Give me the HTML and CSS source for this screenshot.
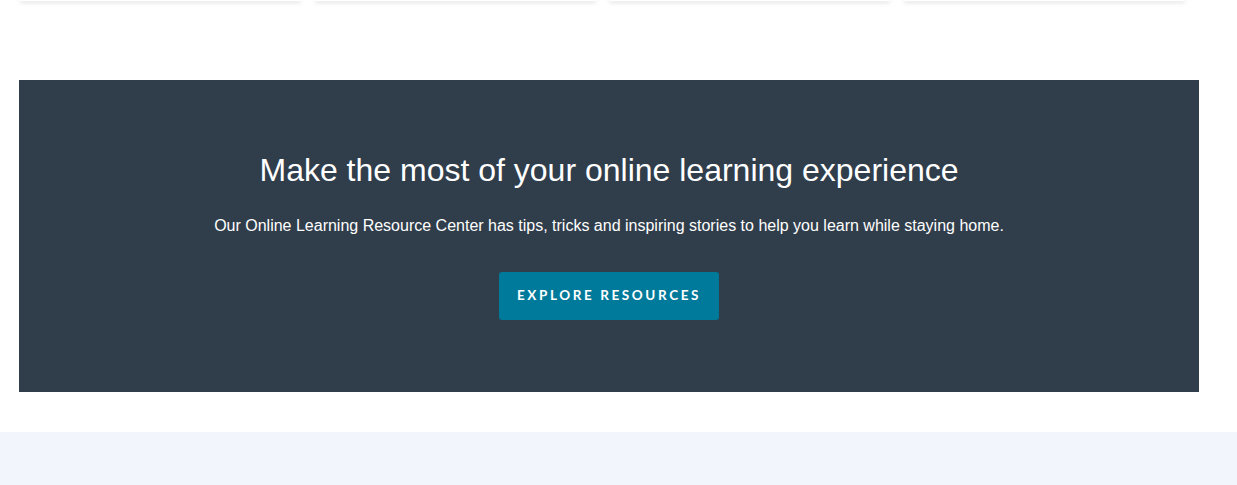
FILE: index.html
```html
<!DOCTYPE html>
<html lang="en">
<head>
<meta charset="utf-8">
<title>Online learning</title>
<link rel="stylesheet" href="styles.css">
</head>
<body>
<div class="cards">
  <div class="card"></div>
  <div class="card"></div>
  <div class="card"></div>
  <div class="card"></div>
</div>
<section class="promo">
  <h2 class="promo-title">Make the most of your online learning experience</h2>
  <p class="promo-text">Our Online Learning Resource Center has tips, tricks and inspiring stories to help you learn while staying home.</p>
  <a class="promo-btn" href="#">EXPLORE RESOURCES</a>
</section>
<div class="spacer"></div>
<div class="light"></div>
</body>
</html>
```
FILE: styles.css
```css
html, body {
  margin: 0;
  padding: 0;
  background: #ffffff;
  font-family: "Liberation Sans", Arial, sans-serif;
}
.cards {
  display: grid;
  grid-template-columns: repeat(4, 281px);
  column-gap: 13.5px;
  padding-left: 20px;
  height: 2px;
}
.card {
  height: 1px;
  background: #ffffff;
  border-radius: 0 0 6px 6px;
  box-shadow: 0 1px 4px rgba(0, 0, 0, 0.35);
}
.promo {
  margin: 78px 38px 0 19px;
  background: #303d4b;
  padding: 70px 20px 72px;
  display: flex;
  flex-direction: column;
  align-items: center;
  text-align: center;
  color: #ffffff;
}
.promo-title {
  margin: 0;
  font-weight: 400;
  font-size: 32px;
  line-height: 40px;
}
.promo-text {
  margin: 24px 0 0;
  font-size: 16px;
  line-height: 24px;
}
.promo-btn {
  margin-top: 34px;
  display: flex;
  align-items: center;
  justify-content: center;
  width: 220px;
  height: 48px;
  box-sizing: border-box;
  background: #007a9b;
  border-radius: 3px;
  color: #ffffff;
  text-decoration: none;
  font-family: Lato, "Liberation Sans", sans-serif;
  font-weight: 700;
  font-size: 13.5px;
  letter-spacing: 2.6px;
  padding: 0 0 3px 0;
}
.spacer {
  height: 40px;
}
.light {
  height: 60px;
  background: #f2f6fc;
}
```
